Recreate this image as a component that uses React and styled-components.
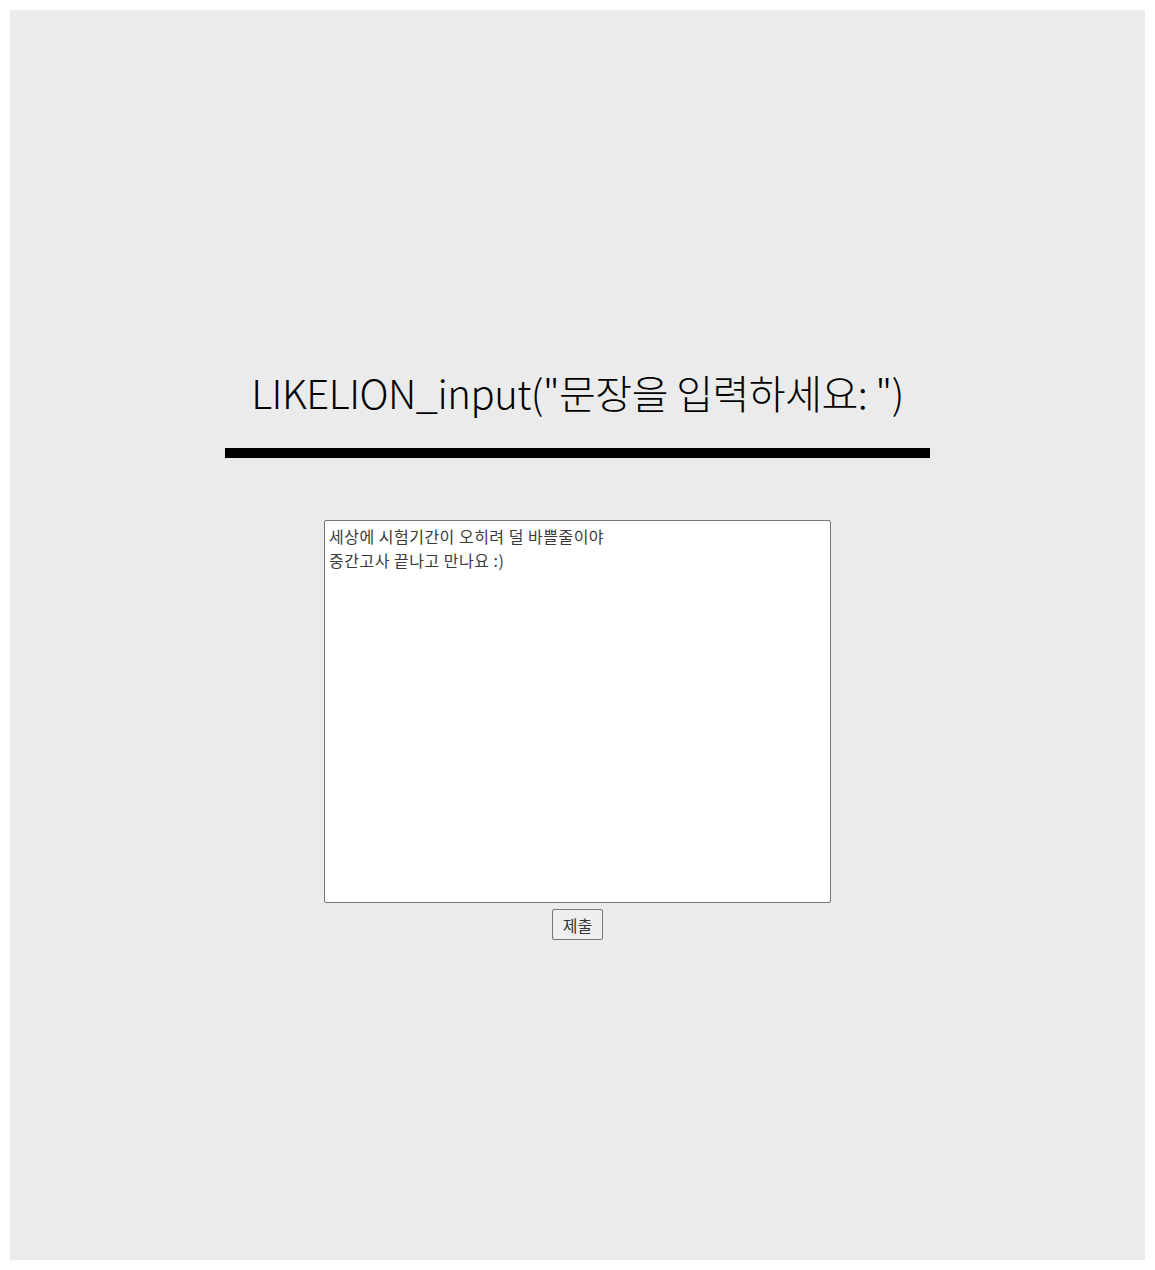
import React from "react";
import styled, { createGlobalStyle } from "styled-components";

const Global = createGlobalStyle`
  html, body { margin: 0; padding: 0; background: #ffffff; }
  body { padding: 10px; font-family: "Noto Sans CJK KR", "Noto Sans", sans-serif; }
`;

const Page = styled.div`
  height: 1250px;
  background: #ebebeb;
  display: flex;
  flex-direction: column;
  align-items: center;
  padding-top: 352px;
  box-sizing: border-box;
`;

const Title = styled.h1`
  margin: 0;
  font-family: "Noto Sans CJK KR", "Noto Sans", sans-serif;
  font-weight: 300;
  font-size: 40px;
  line-height: 60px;
  color: #000;
  letter-spacing: -0.5px;
`;

const Rule = styled.div`
  width: 705px;
  height: 10px;
  background: #000;
  margin-top: 26px;
`;

const Form = styled.form`
  display: flex;
  flex-direction: column;
  align-items: center;
  margin-top: 62px;
  gap: 6px;
`;

const TextArea = styled.textarea`
  width: 507px;
  height: 383px;
  box-sizing: border-box;
  border: 1px solid #767676;
  border-radius: 2px;
  background: #fff;
  padding: 3px 4px;
  font-family: "Noto Sans CJK KR", "Noto Sans", sans-serif;
  font-size: 16px;
  letter-spacing: 0.5px;
  line-height: 24px;
  color: #3a3a3a;
  resize: none;
  outline: none;
`;

const Button = styled.button`
  width: 51px;
  height: 31px;
  box-sizing: border-box;
  border: 1px solid #767676;
  border-radius: 2px;
  background: #efefef;
  font-family: "Noto Sans CJK KR", "Noto Sans", sans-serif;
  font-size: 16px;
  color: #333;
  padding: 0;
`;

export default function App() {
  return (
    <>
      <Global />
      <Page>
        <Title>LIKELION_input("문장을 입력하세요: ")</Title>
        <Rule />
        <Form onSubmit={(e) => e.preventDefault()}>
          <TextArea
            defaultValue={"세상에 시험기간이 오히려 덜 바쁠줄이야\n중간고사 끝나고 만나요 :)"}
          />
          <Button type="submit">제출</Button>
        </Form>
      </Page>
    </>
  );
}
